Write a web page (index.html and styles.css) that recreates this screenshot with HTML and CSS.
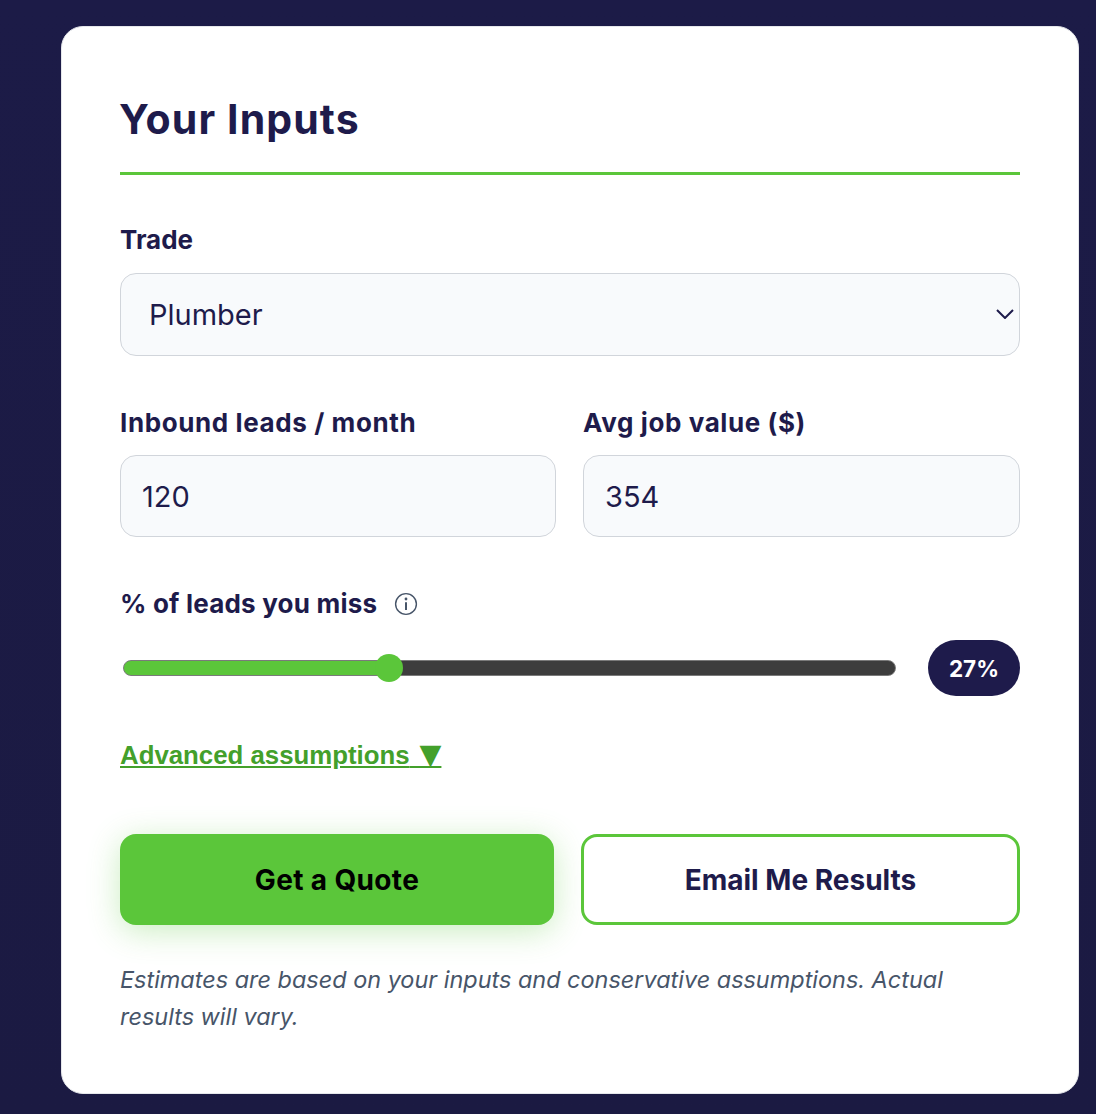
FILE: index.html
```html
<!DOCTYPE html>
<html lang="en">
<head>
<meta charset="utf-8">
<title>Your Inputs</title>
<link rel="stylesheet" href="styles.css">
</head>
<body>
<main class="card">
  <h2 class="title">Your Inputs</h2>
  <label class="label label-first" for="trade">Trade</label>
  <div class="select-wrap">
    <select id="trade" class="control select"><option>Plumber</option></select>
    <svg class="chevron" width="18" height="10" viewBox="0 0 18 10" aria-hidden="true"><path d="M1 1l8 8 8-8" fill="none" stroke="#1e1b4b" stroke-width="2"/></svg>
  </div>
  <div class="pair">
    <div>
      <label class="label" for="leads">Inbound leads / month</label>
      <input id="leads" class="control input" value="120">
    </div>
    <div>
      <label class="label" for="value">Avg job value ($)</label>
      <input id="value" class="control input" value="354">
    </div>
  </div>
  <div class="miss-label">
    <label class="label label-tight" for="miss">% of leads you miss</label>
    <svg class="info" width="24" height="24" viewBox="0 0 24 24" aria-hidden="true"><circle cx="12" cy="12" r="10.4" fill="none" stroke="#475569" stroke-width="1.4"/><circle cx="12" cy="7" r="1.4" fill="#475569"/><path d="M12 10.2V18" fill="none" stroke="#475569" stroke-width="2"/></svg>
  </div>
  <div class="slider-row">
    <input id="miss" class="range" type="range" min="5" max="70" value="27">
    <output class="badge">27%</output>
  </div>
  <a class="advanced" href="#">Advanced assumptions<span class="caret"> ▼</span></a>
  <div class="actions">
    <button class="btn btn-primary" type="button">Get a Quote</button>
    <button class="btn btn-outline" type="button">Email Me Results</button>
  </div>
  <p class="note">Estimates are based on your inputs and conservative assumptions. Actual results will vary.</p>
</main>
</body>
</html>
```
FILE: styles.css
```css
* { box-sizing: border-box; }
html, body { margin: 0; }
body {
  height: 1114px;
  padding: 26px 17px 0 61px;
  overflow: hidden;
  background: linear-gradient(180deg, #1c1b47, #1b1a42);
  font-family: Inter, "Liberation Sans", sans-serif;
  color: #1e1b4b;
}
.card {
  height: 1068px;
  padding: 66px 58px 0;
  background: #fff;
  border: 1px solid #e5e7eb;
  border-radius: 22px;
}
.title {
  margin: 0 0 49px;
  padding-bottom: 27px;
  border-bottom: 3px solid #5bc63a;
  font-size: 41px;
  line-height: 52px;
  font-weight: 700;
  letter-spacing: 1.1px;
  text-indent: -1px;
}
.label {
  display: block;
  font-size: 26px;
  line-height: 32px;
  font-weight: 700;
  margin-bottom: 16px;
  letter-spacing: 0.6px;
}
.label-first { margin-bottom: 17px; letter-spacing: 0; }
.label-tight { letter-spacing: 0.2px; }
.control {
  display: block;
  width: 100%;
  background: #f8fafc;
  border: 1px solid #d1d5db;
  border-radius: 16px;
  font: 400 29px Inter, "Liberation Sans", sans-serif;
  color: #1e1b4b;
  outline: 0;
  appearance: none;
}
.select-wrap { position: relative; }
.select { height: 83px; padding: 0 28px; }
.chevron { position: absolute; right: 6px; top: 36px; }
.input { height: 82px; padding: 0 21px; }
.pair {
  display: grid;
  grid-template-columns: 436px 437px;
  gap: 27px;
  margin-top: 51px;
}
.miss-label {
  display: flex;
  align-items: center;
  gap: 17px;
  height: 32px;
  margin: 51px 0 20px;
}
.miss-label .label { margin: 0; }
.slider-row {
  display: flex;
  align-items: center;
  gap: 32px;
}
.range {
  flex: 1;
  height: 28px;
  margin: 0 0 0 3px;
  background: transparent;
  appearance: none;
  -webkit-appearance: none;
}
.range::-webkit-slider-runnable-track {
  height: 16px;
  border: 1px solid #7a7a7a;
  border-radius: 8px;
  background: linear-gradient(90deg, #5bc63a 0 266px, #3d3d3d 266px);
}
.range::-webkit-slider-thumb {
  -webkit-appearance: none;
  width: 28px;
  height: 28px;
  margin-top: -7px;
  border-radius: 50%;
  background: #5bc63a;
}
.badge {
  display: flex;
  align-items: center;
  justify-content: center;
  width: 92px;
  height: 56px;
  border-radius: 28px;
  background: #1e1b4b;
  color: #fff;
  font-size: 22.5px;
  font-weight: 700;
}
.advanced {
  display: inline-block;
  margin-top: 43px;
  font: 700 25.8px/32px "Liberation Sans", sans-serif;
  color: #43a02b;
  text-decoration: underline;
}
.caret { font-family: "DejaVu Sans", sans-serif; font-size: 28.5px; }
.actions {
  display: grid;
  grid-template-columns: 434px 439px;
  gap: 27px;
  margin-top: 63px;
}
.btn {
  height: 91px;
  border-radius: 16px;
  font: 700 28px Inter, "Liberation Sans", sans-serif;
}
.btn-primary {
  border: 0;
  background: #5bc63a;
  color: #000;
  letter-spacing: 0.35px;
  box-shadow: 0 6px 32px rgba(91, 198, 58, 0.32);
}
.btn-outline {
  border: 3px solid #5bc63a;
  background: #fff;
  color: #1e1b4b;
}
.note {
  margin: 36px 0 0;
  font-size: 23.45px;
  line-height: 37px;
  font-style: italic;
  color: #475569;
}
```
